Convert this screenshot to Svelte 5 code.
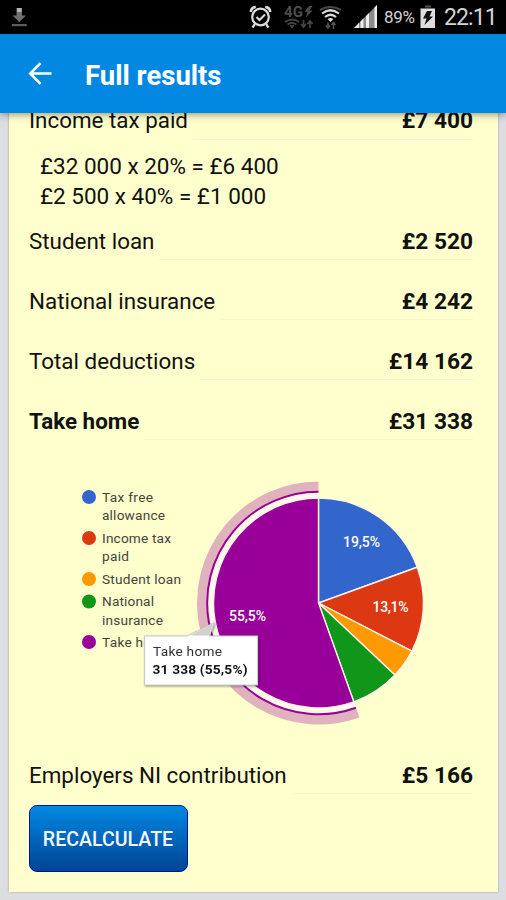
<script>
  const before = [{ label: 'Income tax paid', value: '£7 400' }];
  const rows = [
    { label: 'Student loan', value: '£2 520' },
    { label: 'National insurance', value: '£4 242' },
    { label: 'Total deductions', value: '£14 162' },
    { label: 'Take home', value: '£31 338', strong: true }
  ];

  const cx = 318.5;
  const cy = 603;
  const data = [
    { value: 11000, color: '#3366cc' },
    { value: 7400, color: '#dc3912' },
    { value: 2520, color: '#ff9900' },
    { value: 4242, color: '#109618' },
    { value: 31338, color: '#990099' }
  ];
  const total = data.reduce((sum, d) => sum + d.value, 0);

  function point(r, turn) {
    const a = turn * 2 * Math.PI;
    return `${(cx + r * Math.sin(a)).toFixed(2)} ${(cy - r * Math.cos(a)).toFixed(2)}`;
  }
  function arc(r, from, to) {
    return `M${point(r, from)}A${r} ${r} 0 ${to - from > 0.5 ? 1 : 0} 1 ${point(r, to)}`;
  }

  let turn = 0;
  const slices = data.map((d) => {
    const from = turn;
    turn += d.value / total;
    return { color: d.color, from, d: `${arc(105, from, turn)}L${cx} ${cy}Z` };
  });
  const selected = slices[4].from;

  const legend = [
    { y: 497, color: '#3366cc', lines: [['Tax free', 51], ['allowance', 63]] },
    { y: 538, color: '#dc3912', lines: [['Income tax', 69], ['paid', 27]] },
    { y: 579, color: '#ff9900', lines: [['Student loan', 79]] },
    { y: 601.5, color: '#109618', lines: [['National', 52], ['insurance', 61]] },
    { y: 642, color: '#990099', lines: [['Take home', 69]] }
  ];
</script>

{#snippet row(item)}
  <div class="row" class:strong={item.strong}>
    <span class="label">{item.label}</span>
    <span class="value">{item.value}</span>
  </div>
{/snippet}

<div class="screen">
  <div class="status">
    <svg class="download" width="18" height="22" viewBox="0 0 18 22">
      <path d="M6.500 2h5.500v7.500h4l-6.700 6.500-6.800-6.500h4z" fill="#707070" />
      <path d="M7 2h4.500v4H7z" fill="#b5b5b5" />
      <path d="M1.800 18h15v2.200h-15z" fill="#5c5c5c" />
    </svg>
    <svg class="alarm" width="24" height="26" viewBox="0 0 24 26" fill="none" stroke="#dedede">
      <circle cx="11.500" cy="13" r="8.300" stroke-width="2.200" />
      <path d="M7.500 13l3 3 5.500-5.500" stroke-width="2" />
      <path d="M1.800 8Q2 3.500 6.800 3M21.200 8Q21 3.500 16.200 3" stroke-width="2.600" />
      <path d="M6 20l-2.500 3.500M17 20l2.500 3.500" stroke-width="2.200" />
    </svg>
    <svg class="data" width="32" height="26" viewBox="0 0 32 26">
      <text x="1" y="13" font-size="15" font-weight="700" textLength="19" lengthAdjust="spacingAndGlyphs" fill="#4c4c4c">4G</text>
      <path d="M26 2l-4.500 6h3l-2 6 7-7.500h-3l3-4.500z" fill="#4c4c4c" />
      <g fill="none" stroke="#444" stroke-width="1.800">
        <path d="M2 18q7-5 14 0M4.500 20.500q4.500-3 9 0" />
        <path d="M7 21.500h4L9 24z" fill="#444" stroke-width="1" />
        <path d="M20.500 16v6M18 20l2.500 3 2.500-3M27 24v-6M24.500 20l2.500-3 2.500 3" />
      </g>
    </svg>
    <svg class="wifi" width="24" height="26" viewBox="0 0 24 26" fill="none">
      <path d="M1 6q10.200-6 21 0" stroke="#484848" stroke-width="2.200" />
      <path d="M3 9.500q8.500-6.500 17 0M6 13q5.500-4.500 11 0" stroke="#dadada" stroke-width="2.200" />
      <path d="M8.500 15q3-2 6 0L11.500 18z" fill="#dadada" />
      <path d="M9 18.500v6M7 21.500l2 2.500 2-2.500M14.500 25v-6M12.500 21l2-2.500 2 2.500" stroke="#555" stroke-width="1.500" />
    </svg>
    <svg class="signal" width="24" height="24" viewBox="0 0 24 24">
      <path d="M0 23L23 0v23z" fill="#8b8b8b" />
      <path d="M0 23l5-5v5zM6.500 16.500l3-3V23h-3zM12 11l3-3v15h-3zM20.500 2.500L23 0v23h-2.500z" fill="#eee" />
    </svg>
    <span class="percent">89%</span>
    <svg class="battery" width="16" height="24" viewBox="0 0 16 24">
      <path d="M5 .5h6v2H5z" fill="#555" />
      <path d="M.5 3.500h14.500v19.500H.5z" fill="#dedede" />
      <path d="M7 6h5L9.500 11.500H13L4.500 20l2-6.500H3z" fill="#111" />
    </svg>
    <span class="time">22:11</span>
  </div>

  <header>
    <svg width="24" height="24" viewBox="0 0 24 24" fill="none" stroke="#fff" stroke-width="2.600">
      <path d="M23.500 11.500H2.500M12.500 1.200L2.300 11.500l10.200 10.300" />
    </svg>
    <h1>Full results</h1>
  </header>

  <main>
    <section class="card">
      {#each before as item}{@render row(item)}{/each}
      <div class="details">
        <div>£32 000 x 20% = £6 400</div>
        <div>£2 500 x 40% = £1 000</div>
      </div>
      <div class="rows">
        {#each rows as item}{@render row(item)}{/each}
      </div>

      <svg class="chart" width="489" height="316" viewBox="9 440 489 316">
        {#each legend as item}
          <circle cx="89" cy={item.y} r="7" fill={item.color} />
          {#each item.lines as [text, width], i}
            <text x="102" y={item.y + 4.9 + i * 18.4} textLength={width} class="legend">{text}</text>
          {/each}
        {/each}

        <path d={arc(108, selected, 1)} fill="none" stroke="#fff9e8" stroke-width="5" />
        <path d={arc(116.500, selected, 1)} fill="none" stroke="#990099" stroke-opacity="0.300" stroke-width="10" />
        <path d={arc(111.300, selected, 1)} fill="none" stroke="#990099" stroke-width="2" />
        {#each slices as slice}
          <path d={slice.d} fill={slice.color} stroke="#fff3ee" stroke-width="1.400" />
        {/each}
        <text x="343" y="547" textLength="37" class="share">19,5%</text>
        <text x="372.500" y="612" textLength="36" class="share">13,1%</text>
        <text x="229" y="620.500" textLength="37" class="share">55,5%</text>

        <g class="tooltip">
          <path d="M144.500 636H187L214 623 209.500 636H257.500V685H144.500Z" fill="#fff" stroke="#ccc" stroke-width="1.200" />
          <path d="M190 635.500L213 624l-4 11.500z" fill="#d0d0d0" />
          <text x="153" y="656" textLength="69" class="tip">Take home</text>
          <text x="152.500" y="674.300" textLength="95" class="tip bold">31 338 (55,5%)</text>
        </g>
      </svg>

      {@render row({ label: 'Employers NI contribution', value: '£5 166' })}
      <button>RECALCULATE</button>
    </section>
  </main>
</div>

<style>
  .screen {
    width: 506px;
    height: 900px;
    overflow: hidden;
    display: flex;
    flex-direction: column;
    background: #dcdde1;
    font-family: Roboto, "Noto Sans", sans-serif;
    color: #11110d;
  }
  .status {
    flex: none;
    height: 34px;
    display: flex;
    align-items: center;
    background: #000;
    color: #d4d4d4;
    white-space: nowrap;
  }
  .status svg { flex: none; }
  .download { margin-left: 10px; }
  .alarm { margin-left: 221px; }
  .data { margin-left: 10px; }
  .wifi { margin-left: 4px; }
  .signal { margin-left: 11px; }
  .percent { width: 32px; margin-left: 6px; font-size: 17px; letter-spacing: -0.3px; }
  .battery { margin-left: 4px; }
  .time { margin-left: 8px; margin-top: 1px; font-size: 23px; letter-spacing: -0.9px; }
  header {
    flex: none;
    height: 79px;
    display: flex;
    align-items: center;
    gap: 33px;
    box-sizing: border-box;
    padding: 0 28px 0 28px;
    background: #0288e3;
    box-shadow: 0 1px 8px rgba(0, 0, 0, 0.45);
    z-index: 1;
  }
  h1 {
    margin: 3px 0 0;
    font-size: 27.500px;
    font-weight: 700;
    color: #fff;
  }
  main { flex: 1; padding: 0 8px 8px 9px; display: flex; }
  .card {
    flex: 1;
    display: flex;
    flex-direction: column;
    background: #ffffcd;
    box-shadow: 0 0 2px rgba(0, 0, 0, 0.3);
  }
  .row {
    flex: none;
    height: 38px;
    display: flex;
    padding: 0 25px 0 20px;
    font-size: 22.400px;
    line-height: 38px;
    white-space: nowrap;
  }
  .label { margin-right: 5px; }
  .value {
    flex: 1;
    border-bottom: 1px solid #f3f5cf;
    text-align: right;
    font-weight: 700;
    font-size: 22.700px;
    line-height: 40px;
    box-sizing: border-box;
  }
  .strong { font-weight: 700; }
  .card > .row:first-child { margin-top: -11px; line-height: 36px; }
  .card > .row:first-child .value { line-height: 38px; }
  .details {
    height: 82px;
    box-sizing: border-box;
    padding: 10.500px 0 0 31px;
    font-size: 22.500px;
    line-height: 30.500px;
  }
  .rows { display: flex; flex-direction: column; gap: 22px; }
  .chart { display: block; flex: none; }
  .legend { font-size: 13.700px; fill: #44443c; }
  .share { font-size: 14px; font-weight: 500; fill: #fff; }
  .tooltip { filter: drop-shadow(1px 1px 1px rgba(0, 0, 0, 0.4)); }
  .tip { font-size: 13.700px; fill: #333; }
  .bold { font-weight: 700; fill: #111; }
  button {
    width: 159px;
    height: 67px;
    margin: 11px 0 0 19.500px;
    padding: 2px 0 0;
    border: 1px solid #00138f;
    border-radius: 8px;
    background: linear-gradient(#0289e3, #004494);
    color: #f0f7ff;
    font: 500 19.600px Roboto, "Noto Sans", sans-serif;
  }
</style>
